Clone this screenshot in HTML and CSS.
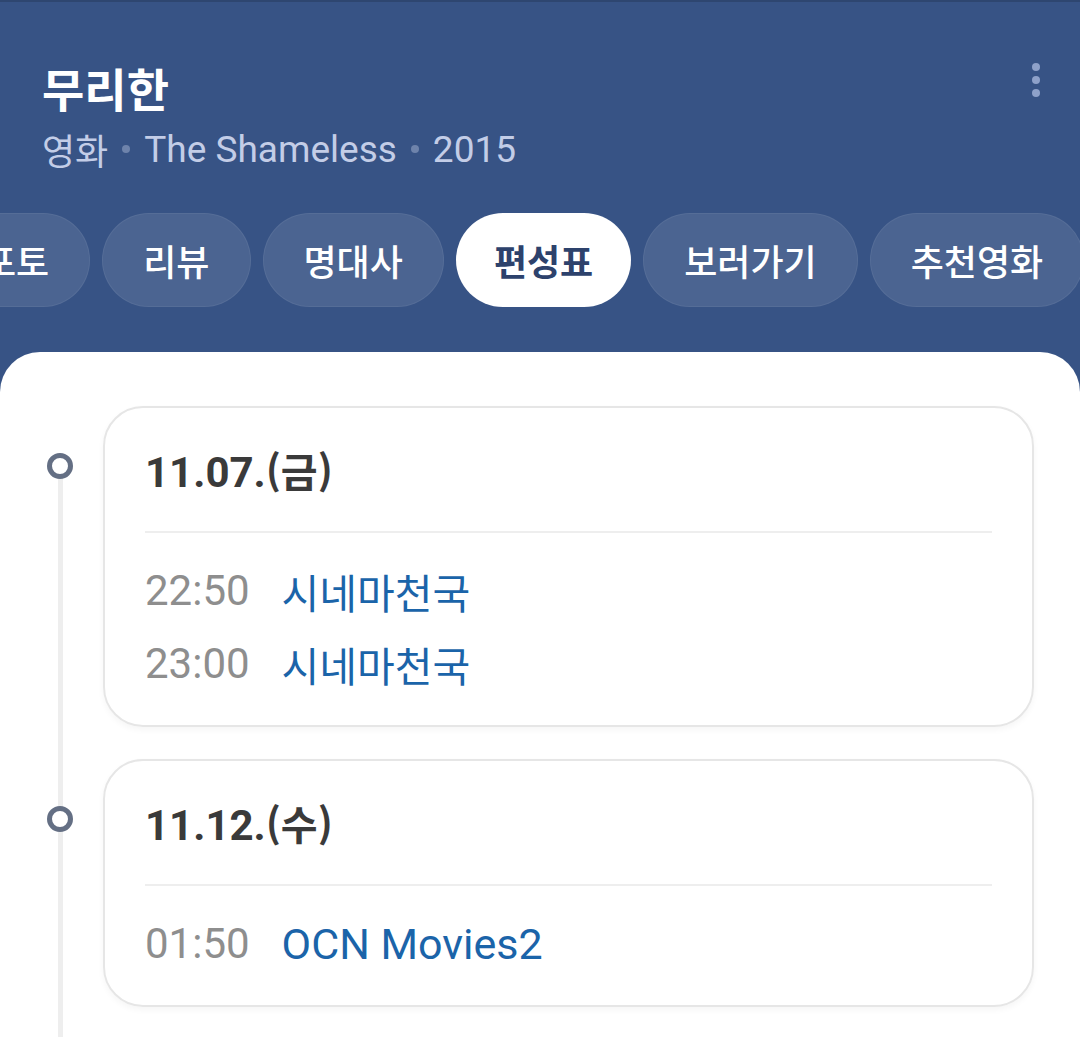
FILE: index.html
```html
<!DOCTYPE html>
<html lang="ko">
  <head>
    <meta charset="UTF-8" />
    <meta name="viewport" content="width=device-width, initial-scale=1.0" />
    <title>무리한 - 편성표</title>
    <link rel="stylesheet" href="styles.css">
  </head>
  <body>
    <div class="page">
      <header class="header">
        <div class="title-row">
          <h1 class="title">무리한</h1>
          <button class="menu-btn" aria-label="더보기">
            <svg width="8" height="34" viewBox="0 0 8 34">
              <circle cx="4" cy="4" r="4" />
              <circle cx="4" cy="17" r="4" />
              <circle cx="4" cy="30" r="4" />
            </svg>
          </button>
        </div>
        <div class="subtitle">
          <span class="ko">영화</span>
          <span class="dot"></span>
          <span>The Shameless</span>
          <span class="dot"></span>
          <span>2015</span>
        </div>
        <nav class="tabs">
          <a class="tab">포토</a>
          <a class="tab">리뷰</a>
          <a class="tab">명대사</a>
          <a class="tab active">편성표</a>
          <a class="tab">보러가기</a>
          <a class="tab">추천영화</a>
        </nav>
      </header>

      <main class="panel">
        <div class="timeline">
          <div class="item">
            <div class="rail"><span class="marker"></span></div>
            <div class="card">
              <div class="date">11.07.<span class="ko">(금)</span></div>
              <div class="divider"></div>
              <ul class="list">
                <li class="row"><span class="time">22:50</span><span class="channel ko">시네마천국</span></li>
                <li class="row"><span class="time">23:00</span><span class="channel ko">시네마천국</span></li>
              </ul>
            </div>
          </div>

          <div class="item">
            <div class="rail"><span class="marker"></span></div>
            <div class="card">
              <div class="date">11.12.<span class="ko">(수)</span></div>
              <div class="divider"></div>
              <ul class="list">
                <li class="row"><span class="time">01:50</span><span class="channel">OCN Movies2</span></li>
              </ul>
            </div>
          </div>
        </div>
      </main>
    </div>
  </body>
</html>
```

FILE: styles.css
```css
body {
  margin: 0;
  font-family: Roboto, "Noto Sans CJK KR", sans-serif;
  background: #ffffff;
  overflow: hidden;
}

.page {
  background: #375385;
  border-top: 2px solid #2e4670;
  min-height: 100vh;
}

.ko {
  font-family: "Noto Sans CJK KR", sans-serif;
}

.header {
  padding-top: 56px;
  overflow: hidden;
}

.title-row {
  display: flex;
  justify-content: space-between;
  align-items: flex-start;
  padding: 0 40px 0 42px;
}

.title {
  margin: 0;
  font-family: "Noto Sans CJK KR", sans-serif;
  font-size: 46px;
  line-height: 58px;
  font-weight: 700;
  color: #ffffff;
}

.menu-btn {
  background: none;
  border: none;
  padding: 0;
  margin-top: 5px;
  fill: #8ea1c9;
  cursor: pointer;
}

.subtitle {
  display: flex;
  align-items: center;
  margin-top: 10px;
  padding-left: 42px;
  height: 46px;
  font-size: 37px;
  color: #c3cde7;
}

.subtitle .ko {
  font-size: 36px;
}

.subtitle .dot {
  width: 8px;
  height: 8px;
  border-radius: 50%;
  background: #6e83ab;
  margin: 0 14px;
}

.tabs {
  display: flex;
  gap: 12px;
  margin-top: 41px;
  margin-left: -58px;
}

.tab {
  flex-shrink: 0;
  display: flex;
  align-items: center;
  height: 94px;
  box-sizing: border-box;
  padding: 0 40px;
  border-radius: 47px;
  border: 1px solid rgba(255, 255, 255, 0.06);
  background: rgba(255, 255, 255, 0.1);
  font-family: "Noto Sans CJK KR", sans-serif;
  font-size: 36px;
  font-weight: 500;
  color: #ffffff;
}

.tab.active {
  background: #ffffff;
  color: #2d426c;
  font-weight: 700;
  padding: 0 37px;
}

.panel {
  margin-top: 45px;
  background: #ffffff;
  border-radius: 40px 40px 0 0;
  padding-top: 54px;
  min-height: 700px;
}

.timeline {
  position: relative;
  padding-bottom: 80px;
}

.timeline::before {
  content: "";
  position: absolute;
  left: 58px;
  top: 60px;
  bottom: 0;
  width: 5px;
  background: #eeeeee;
}

.item {
  display: flex;
  margin-bottom: 32px;
}

.rail {
  flex: 0 0 103px;
  position: relative;
}

.marker {
  display: block;
  width: 26px;
  height: 26px;
  box-sizing: border-box;
  margin: 47px 0 0 47px;
  border: 5px solid #646f84;
  border-radius: 50%;
  background: #ffffff;
  position: relative;
}

.card {
  flex: 1;
  margin-right: 46px;
  padding: 35px 40px 22px;
  border: 2px solid #e6e6e6;
  border-radius: 40px;
  box-shadow: 0 3px 6px rgba(0, 0, 0, 0.04);
}

.date {
  font-size: 42px;
  line-height: 54px;
  font-weight: 700;
  color: #3a3a3a;
}

.date .ko {
  font-size: 40px;
}

.divider {
  height: 2px;
  margin-top: 31px;
  background: #eeeeee;
}

.list {
  list-style: none;
  margin: 0;
  padding: 21px 0 3px;
}

.row {
  display: flex;
  align-items: center;
  height: 73px;
  font-size: 42px;
}

.time {
  color: #8e8e8e;
  margin-right: 32px;
}

.channel {
  color: #1b64a9;
  font-size: 43px;
}

.channel.ko {
  font-size: 41px;
}
```
